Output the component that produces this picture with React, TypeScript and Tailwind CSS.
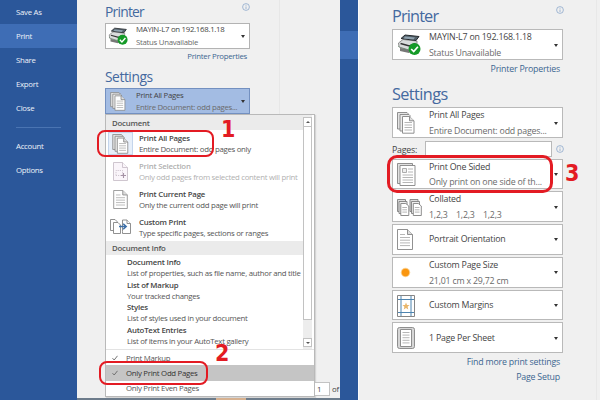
import type { ReactNode } from 'react'

function Lines({ x, y, w, n, gap = 3 }: { x: number; y: number; w: number; n: number; gap?: number }) {
  return (
    <>
      {Array.from({ length: n }, (_, i) => (
        <path key={i} d={`M${x} ${y + i * gap}h${w}`} stroke="#a3a3a3" strokeWidth=".8" />
      ))}
    </>
  )
}

function PagesIcon({ className = '' }: { className?: string }) {
  return (
    <svg width="18" height="22" viewBox="0 0 18 22" fill="#fff" stroke="#858585" strokeWidth=".9" className={className}>
      <path d="M.5 17V.5h9.5l1 1V17z" fill="#e4e4e4" />
      <path d="M3 19V2.500h9l1 1V19z" fill="#ececec" />
      <path d="M5.500 21.200V4.500h7l4.500 4.300v12.400z" />
      <path d="M12.500 4.500v4.300H17" fill="#ddd" />
      <Lines x={7.5} y={10.5} w={7.5} n={4} gap={2.5} />
    </svg>
  )
}

function PageIcon({ className = '' }: { className?: string }) {
  return (
    <svg width="16" height="21" viewBox="0 0 16 21" fill="#fff" stroke="#858585" strokeWidth=".9" className={className}>
      <path d="M.5 20.500V.5h10l5 5v15z" />
      <path d="M10.500.5v5h5" fill="#ddd" />
      <Lines x={3} y={5.5} w={5} n={1} />
      <Lines x={3} y={8.5} w={10} n={4} gap={2.7} />
    </svg>
  )
}

function SelectionIcon() {
  return (
    <svg width="15" height="19" viewBox="0 0 15 19" fill="#faf5fa" stroke="#c9bfc9" strokeWidth=".9">
      <path d="M.5 18.500V.5h9l5 5v13z" />
      <path d="M9.500 .5v5h5" />
      <path d="M3 13.500V8.500h6.500v5z" strokeDasharray="1.2 1" />
      <path d="M8 13.500h5M10.500 11v5" stroke="#a592a5" strokeWidth="1.100" />
    </svg>
  )
}

function CustomPrintIcon() {
  return (
    <svg width="21" height="16" viewBox="0 0 21 16" fill="#fff" stroke="#858585" strokeWidth=".9">
      <path d="M.5 11.500V.5h4.500l2 2v9z" />
      <path d="M3.500 14.500v-11H8l2.500 2.500v8.500z" />
      <path d="M12.500 12.500V1h4.500l3.500 3.500v10h-8z" />
      <path d="M17 1v3.500h3.500" />
      <path d="M9 7.500h7M13.200 4.700l3 2.800-3 2.800" fill="none" stroke="#3d6fa8" strokeWidth="1.500" />
    </svg>
  )
}

function OneSidedIcon() {
  return (
    <svg width="19" height="23" viewBox="0 0 19 23" fill="#fff" stroke="#858585" strokeWidth=".9">
      <path d="M.5 20.500V.5h15v20z" fill="#e1e1e1" />
      <path d="M3 22.500v-20h15v20z" />
      <path d="M5.500 5.500h4v4h-4z" fill="#eee" stroke="#a3a3a3" />
      <Lines x={11} y={6} w={5} n={2} />
      <Lines x={5.5} y={12} w={10.5} n={4} gap={2.5} />
    </svg>
  )
}

function CollatedIcon() {
  return (
    <svg width="25" height="17" viewBox="0 0 25 17" fill="#fff" stroke="#808080" strokeWidth=".9">
      {[0, 12.5].map(x => (
        <g key={x} transform={`translate(${x} 0)`}>
          <path d="M.5 12.500V.5h8v12z" fill="#ddd" />
          <path d="M2 14.500v-12h8v12z" fill="#eee" />
          <path d="M3.800 16.500v-12h5l3 2.500v9.500z" />
          <Lines x={5.3} y={8.5} w={4.7} n={3} gap={2.3} />
        </g>
      ))}
    </svg>
  )
}

function SunIcon() {
  return (
    <svg width="20" height="20" viewBox="0 0 20 20">
      <circle cx="8.500" cy="9.500" r="4.700" fill="#fbd08f" />
      <circle cx="8.500" cy="9.500" r="3.700" fill="#fa960f" />
    </svg>
  )
}

function MarginsIcon() {
  return (
    <svg width="18" height="22" viewBox="0 0 18 22" fill="none">
      <path d="M.5 .5h17v21H.5z" fill="#fff" stroke="#858585" />
      <path d="M4 1v20M14 1v20M1 4.500h16M1 17.500h16" stroke="#4d84b0" />
      <path d="M9 7.500l1 2.500 2.600.1-2 1.700.7 2.600L9 13l-2.300 1.400.7-2.600-2-1.700L8 10z" fill="#e9b66b" />
    </svg>
  )
}

function SheetIcon() {
  return (
    <svg width="18" height="22" viewBox="0 0 18 22" fill="#fff" stroke="#858585" strokeWidth=".9">
      <rect x=".5" y=".5" width="17" height="21" rx="2" fill="#d6d6d6" />
      <path d="M3.500 2.500h11v17h-11z" />
      <Lines x={5.5} y={5.5} w={7} n={5} gap={2.6} />
    </svg>
  )
}

function PrinterIcon({ className = '' }: { className?: string }) {
  return (
    <svg width="24" height="22" viewBox="0 0 24 22" className={className}>
      <path d="M3 14l9 1 8-5v4l-8 5-9-2z" fill="#777" />
      <path d="M1 12.500l3-2 9 2.500-3 3z" fill="#55b864" />
      <path d="M1.500 9L6 5.500 20 7v5l-8 4-10-3z" fill="#d9dcdc" stroke="#666" strokeWidth=".7" />
      <path d="M4 4.500L8 1l14 1.500-3 4z" fill="#53616b" stroke="#252a2e" />
      <path d="M8 2.500l10 1-1.500 2-10-1z" fill="#8fa2af" />
      <path d="M3.500 9.500l9 2.500 6-2.500" fill="none" stroke="#333" strokeWidth="1.500" />
      <circle cx="17.500" cy="15" r="6" fill="#149a27" />
      <path d="M14.200 15l2.500 2.500 4.200-4.700" fill="none" stroke="#fff" strokeWidth="1.700" />
    </svg>
  )
}

function InfoIcon() {
  return (
    <svg width="8" height="8" viewBox="0 0 8 8" fill="none" stroke="#7f9fc7" strokeWidth=".7">
      <circle cx="4" cy="4" r="3.400" />
      <path d="M4 3.500V6M4 1.900v.8" />
    </svg>
  )
}

function Caret() {
  return <span className="h-0 w-0 shrink-0 border-x-[2.5px] border-t-[3px] border-x-transparent border-t-[#333]" />
}

function Select({ icon, title, sub, className = '', iconBox = 'w-[32px]' }: {
  icon: ReactNode
  title: string
  sub?: string
  className?: string
  iconBox?: string
}) {
  return (
    <div className={`flex shrink-0 items-center border pr-1 ${className}`}>
      <div className={`flex shrink-0 items-center ${iconBox}`}>{icon}</div>
      <div className="flex min-w-0 grow flex-col justify-between self-stretch whitespace-pre">
        <span className={sub ? '' : 'my-auto pb-px'}>{title}</span>
        {sub && <span className="text-[#6b6b6b]">{sub}</span>}
      </div>
      <Caret />
    </div>
  )
}

function Sidebar() {
  return (
    <nav className="flex w-[77px] shrink-0 flex-col bg-[#2b579a] font-medium text-[#edf2f9]">
      {['Save As', 'Print', 'Share', 'Export', 'Close'].map(label => (
        <div key={label} className={`flex h-6 shrink-0 items-center pl-4 ${label === 'Print' ? 'bg-[#3e6db5]' : ''}`}>{label}</div>
      ))}
      <div className="mt-[7px] ml-4 h-px w-[45px] shrink-0 bg-[#4a74b2]" />
      <div className="mt-1.5 flex h-6 shrink-0 items-center pl-4">Account</div>
      <div className="flex h-6 shrink-0 items-center pl-4">Options</div>
    </nav>
  )
}

const ranges = [
  { title: 'Print All Pages', sub: 'Entire Document: odd pages only', icon: <PagesIcon className="h-5 w-[17px]" />, active: true },
  { title: 'Print Selection', sub: 'Only odd pages from selected content will print', icon: <SelectionIcon />, disabled: true },
  { title: 'Print Current Page', sub: 'Only the current odd page will print', icon: <PageIcon className="h-[19px] w-[15px]" /> },
  { title: 'Custom Print', sub: 'Type specific pages, sections or ranges', icon: <CustomPrintIcon /> },
]

const infos = [
  ['Document Info', 'List of properties, such as file name, author and title'],
  ['List of Markup', 'Your tracked changes'],
  ['Styles', 'List of styles used in your document'],
  ['AutoText Entries', 'List of items in your AutoText gallery'],
]

function Check() {
  return (
    <svg width="6" height="6" viewBox="0 0 6 6" fill="none" stroke="#666" strokeWidth=".9">
      <path d="M.5 3.200l1.700 1.800L5.500 .8" />
    </svg>
  )
}

function Dropdown() {
  return (
    <div className="flex h-[283px] w-[210px] shrink-0 flex-col border border-[#b9b9b9] bg-white leading-[10px] whitespace-nowrap text-[#555] shadow-[1px_1px_1px_#d5d5d5]">
      <div className="flex h-[235px] shrink-0 border-b border-[#e3e3e3]">
        <div className="flex min-w-0 grow flex-col">
          <div className="flex h-[15px] shrink-0 items-center bg-[#ebebeb] pl-1.5 font-semibold tracking-[-0.2px]">Document</div>
          {ranges.map(r => (
            <div key={r.title} className={`flex h-[27.8px] shrink-0 items-center ${r.disabled ? 'text-[#b0b0b0]' : ''}`}>
              <div className={`ml-[3px] flex h-[21px] w-[23px] shrink-0 items-center justify-center ${r.active ? 'bg-[#e7effa] outline outline-[#c4d5ec]' : ''}`}>{r.icon}</div>
              <div className="ml-[7px] flex flex-col gap-px">
                <span className={`font-semibold tracking-[-0.2px] ${r.disabled ? '' : 'text-[#444]'}`}>{r.title}</span>
                <span>{r.sub}</span>
              </div>
            </div>
          ))}
          <div className="flex h-3.5 shrink-0 items-center bg-[#ebebeb] pl-1.5 font-semibold tracking-[-0.2px]">Document Info</div>
          <div className="flex flex-col pt-px pl-[21px]">
            {infos.map(([title, sub]) => (
              <div key={title} className="flex h-[22.7px] flex-col justify-center gap-px">
                <span className="font-semibold tracking-[-0.2px] text-[#444]">{title}</span>
                <span>{sub}</span>
              </div>
            ))}
          </div>
        </div>
        <div className="mr-0.5 flex w-[9px] shrink-0 flex-col bg-[#ededed]">
          <div className="mt-0.5 flex h-2.5 items-center justify-center border border-[#c2c2c2] bg-white">
            <span className="border-x-2 border-b-[2.5px] border-x-transparent border-b-[#555]" />
          </div>
          <div className="h-[193px] border border-t-0 border-[#c2c2c2] bg-white" />
          <div className="mt-auto mb-0.5 flex h-[9px] items-center justify-center border border-[#c2c2c2] bg-white">
            <span className="border-x-2 border-t-[2.5px] border-x-transparent border-t-[#555]" />
          </div>
        </div>
      </div>
      {['Print Markup', 'Only Print Odd Pages', 'Only Print Even Pages'].map((label, i) => (
        <div key={label} className={`flex h-[15.3px] shrink-0 items-center pl-1.5 ${i === 1 ? 'bg-[#c5c5c5] text-[#333]' : ''}`}>
          <span className="w-3.5">{i < 2 && <Check />}</span>
          {label}
        </div>
      ))}
    </div>
  )
}

function LeftPane() {
  return (
    <div className="flex h-full w-[263px] shrink-0 flex-col bg-[linear-gradient(90deg,#f0f0f0_202px,#e7e7e7_202px,#e7e7e7_203px,#f0f0f0_203px)]">
      <div className="flex h-[398px] shrink-0 flex-col pl-[28px]">
        <div className="flex h-[23px] w-[145px] shrink-0 justify-between">
          <h1 className="text-[13.8px] leading-6 tracking-[-0.75px] text-[#44699f]">Printer</h1>
          <span className="pt-[3px]"><InfoIcon /></span>
        </div>
        <Select
          icon={<PrinterIcon className="h-[19px] w-5" />}
          title="MAYIN-L7 on 192.168.1.18"
          sub="Status Unavailable"
          className="h-[26px] w-[145px] border-[#b3b3b3] bg-white pl-0.5"
          iconBox="w-[28px]"
        />
        <div className="w-[142px] pt-0.5 text-right text-[#3c6690]">Printer Properties</div>
        <h1 className="mt-[3px] h-[23px] shrink-0 text-[13.8px] leading-6 tracking-[-0.45px] text-[#44699f]">Settings</h1>
        <Select
          icon={<PagesIcon className="h-[19px] w-4" />}
          title="Print All Pages"
          sub="Entire Document: odd pages..."
          className="h-[26px] w-[145px] border-[#7390c0] bg-[#a3bce3] pt-px pl-1"
          iconBox="w-[26px]"
        />
        <div className="flex shrink-0 items-end">
          <Dropdown />
          <div className="mb-px flex h-[14px] w-[15px] items-center border border-l-0 border-[#c3c3c3] bg-white pl-0.5">1</div>
          <span className="mb-0.5 ml-0.5">of</span>
        </div>
      </div>
      <div className="mt-auto flex h-0.5 shrink-0 bg-[#6d7c8b] pl-[139px]">
        <div className="w-[30px] bg-[#d6b190]" />
      </div>
    </div>
  )
}

function RightPane() {
  const box = 'w-[171px] border-[#b9b9b9] bg-white pl-1 pt-px'
  const row = `${box} h-[30.8px]`
  return (
    <div className="flex h-full w-[242px] shrink-0 border-l border-[#fafafa] bg-[#f0f0f0] text-[8.8px] leading-3 tracking-[-0.2px]">
      <div className="flex w-[238px] flex-col border-r border-[#e8e8e8] pl-[33px]">
        <div className="flex h-[29px] w-[172px] shrink-0 justify-between">
          <h1 className="text-[16.3px] leading-8 tracking-[-0.85px] text-[#44699f]">Printer</h1>
          <span className="pt-1.5"><InfoIcon /></span>
        </div>
        <Select icon={<PrinterIcon />} title="MAYIN-L7 on 192.168.1.18" sub="Status Unavailable" className={`${box} h-[31px]`} />
        <div className="w-[168px] pt-[3px] text-right text-[#3c6690]">Printer Properties</div>
        <h1 className="mt-[7px] h-[25px] text-[16.3px] leading-6 tracking-[-0.6px] text-[#44699f]">Settings</h1>
        <Select icon={<PagesIcon />} title="Print All Pages" sub="Entire Document: odd pages..." className={`${box} h-[31px]`} />
        <div className="mt-[3px] flex h-4 w-[172px] shrink-0 items-center">
          <span className="w-[33px] pt-0.5">Pages:</span>
          <div className="mr-1 h-4 w-[127px] border border-[#b9b9b9] bg-white" />
          <InfoIcon />
        </div>
        <div className="mt-[1.5px] flex flex-col gap-0.5">
          <Select icon={<OneSidedIcon />} title="Print One Sided" sub="Only print on one side of th..." className={row} />
          <Select icon={<CollatedIcon />} title="Collated" sub="1,2,3    1,2,3    1,2,3" className={row} />
          <Select icon={<PageIcon />} title="Portrait Orientation" className={row} />
          <Select icon={<SunIcon />} title="Custom Page Size" sub="21,01 cm x 29,72 cm" className={row} />
          <Select icon={<MarginsIcon />} title="Custom Margins" className={row} />
          <Select icon={<SheetIcon />} title="1 Page Per Sheet" className={row} />
        </div>
        <div className="flex w-[168px] flex-col gap-[3px] pt-[3px] text-right text-[#3c6690]">
          <span>Find more print settings</span>
          <span>Page Setup</span>
        </div>
      </div>
    </div>
  )
}

export default function App() {
  const num = "absolute text-[23px] leading-6 text-[#e31b23] font-['DejaVu_Sans_Condensed','DejaVu_Sans',sans-serif] font-bold tracking-normal"
  return (
    <main className="relative flex h-[400px] w-[600px] overflow-hidden font-['Open_Sans',sans-serif] text-[7.8px] leading-[11px] tracking-[-0.28px] text-[#444]">
      <Sidebar />
      <LeftPane />
      <div className="w-[18px] shrink-0 bg-[#2b579a] pt-[31px]">
        <div className="h-[28px] bg-[#3e6db5]" />
      </div>
      <RightPane />

      {/* numbered highlights over the three settings */}
      <div className="absolute top-[130px] left-[97px] h-[27px] w-[117px] rounded-lg border-2 border-[#e31b23]" />
      <div className="absolute top-[361px] left-[99px] h-6 w-[109px] rounded-lg border-2 border-[#e31b23]" />
      <div className="absolute top-[155px] left-[387px] h-[38px] w-[166px] rounded-[10px] border-[3.5px] border-[#e31b23]" />
      <span className={`${num} top-[117px] left-[221px]`}>1</span>
      <span className={`${num} top-[341px] left-[215px]`}>2</span>
      <span className={`${num} top-[161px] left-[565px]`}>3</span>
    </main>
  )
}
